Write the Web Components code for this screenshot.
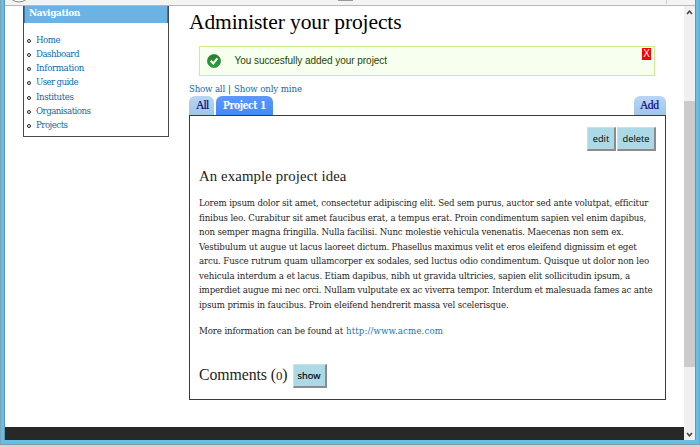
<!DOCTYPE html>
<html lang="en"><head><meta charset="utf-8"><title>Administer your projects</title>
<style>
html,body{margin:0;width:700px;height:447px;overflow:hidden;background:#fff}
body{font-family:"DejaVu Serif Condensed","DejaVu Serif",serif;font-stretch:condensed;color:#262626;font-size:9.6px}
</style></head><body>
<app-window></app-window>
<script>
const define=(name,html,ready)=>customElements.define(name,class extends HTMLElement{
  connectedCallback(){
    if(this.shadowRoot)return;
    const t=document.createElement('template');t.innerHTML=html;
    this.attachShadow({mode:'open'}).append(t.content.cloneNode(true));
    if(ready)ready(this);
  }
});

/* A single line whose tracking is adjusted to the width in its "w" attribute. */
define('text-line',`<style>
:host{display:block;white-space:nowrap;line-height:inherit}
span{display:inline-block;white-space:nowrap}
</style><span><slot></slot></span>`,el=>{
  const s=el.shadowRoot.querySelector('span');
  const w=+el.getAttribute('w');
  if(w){const n=el.textContent.length;s.style.letterSpacing=((w-s.getBoundingClientRect().width)/n)+'px'}
});

define('nav-box',`<style>
:host{display:block;box-sizing:border-box;width:146px;height:131px;border:1px solid #4a4a4a;border-top:0}
header{height:17px;background:#6bb2e5;color:#fff;font-weight:bold;font-size:10px;line-height:14px;padding-left:5px;box-sizing:border-box;box-shadow:inset 1px 0 #3878aa,inset -1px 0 #3878aa}
ul{list-style:none;margin:0;padding:10px 0 0 3px}
li{display:flex;align-items:center;gap:5px;height:14.15px;line-height:14px;color:#0d6cb0}
li::before{content:"";box-sizing:border-box;width:4px;height:4px;border:1.2px solid #222;border-radius:50%;margin-top:2px}
</style><header><text-line w="51">Navigation</text-line></header>
<ul><li><text-line w="24">Home</text-line></li><li><text-line w="43">Dashboard</text-line></li><li><text-line w="48">Information</text-line></li><li><text-line w="42">User guide</text-line></li><li><text-line w="37.5">Institutes</text-line></li><li><text-line w="54.5">Organisations</text-line></li><li><text-line w="31.5">Projects</text-line></li></ul>`);

define('success-message',`<style>
:host{display:flex;box-sizing:border-box;width:456px;height:30px;border:1px solid #c9ed91;background:#f7ffee;color:#234600;font:10px/28px "Liberation Sans",sans-serif;padding:0 3px 0 7px;align-items:center}
svg{width:14px;height:14px;margin-right:13.5px;flex:none}
i{font-style:normal;margin-left:auto;align-self:flex-start;margin-top:1px;width:9px;height:12px;background:#f00;color:#fff;font-size:10px;line-height:12px;text-align:center}
</style><svg viewBox="0 0 14 14"><defs><linearGradient id="g" x2="0" y2="1"><stop stop-color="#267c2b"/><stop offset="1" stop-color="#29a637"/></linearGradient></defs><circle cx="7" cy="7" r="6.6" fill="url(#g)" stroke="#43834a" stroke-width=".7"/><path d="M3.6 6.7L6.3 9.5L10.4 4.3" fill="none" stroke="#fff" stroke-width="2.1"/></svg><text-line w="152.5">You succesfully added your project</text-line><i>X</i>`);

define('tab-item',`<style>
:host{display:block;box-sizing:border-box;height:19px;border-radius:6px 6px 0 0;background:linear-gradient(#b9d5f4,#a0c6e6);color:#00008b;font:11.5px/18px "Liberation Serif",serif;padding-left:7px;-webkit-text-stroke:.2px}
:host([active]){background:linear-gradient(#5b98ff,#4489fb);color:#fff;font:bold 10.2px/18px "DejaVu Serif Condensed","DejaVu Serif",serif;font-stretch:condensed;-webkit-text-stroke:0}
:host([add]){margin-left:auto;padding-left:6px}
.digit{font-size:.85em}
</style><slot></slot>`);

define('push-button',`<style>
:host{display:block;box-sizing:border-box;height:24px;background:#add8e6;border:1px solid #c8e2eb;border-right:2px solid #8b8b8b;border-bottom:2px solid #8b8b8b;color:#000;font:9.3px/21px "Open Sans",sans-serif;text-align:center}
</style><slot></slot>`);

define('project-panel',`<style>
:host{display:block;box-sizing:border-box;width:477px;height:285px;border:1px solid #3c3c3c;padding:11px 9px 0 9px}
.actions{display:flex;justify-content:flex-end;gap:1px}
h2{font:14.8px/20px "Liberation Serif",serif;color:#222;margin:15px 0 0}
.body{margin-top:10px;line-height:14.5px}
.body text-line{height:14.5px}
.more{display:flex;gap:3px;line-height:14px;margin-top:12px}
.more .link{color:#0d76bd}
.comments{display:flex;align-items:center;margin-top:26px}
.comments h2{margin:0 5px 0 0;height:22px;font-size:15.8px}
.digit{font-size:.82em}
</style>
<div class="actions"><push-button style="width:29px">edit</push-button><push-button style="width:39px">delete</push-button></div>
<h2><text-line w="147.5">An example project idea</text-line></h2>
<div class="body">
<text-line w="449">Lorem ipsum dolor sit amet, consectetur adipiscing elit. Sed sem purus, auctor sed ante volutpat, efficitur</text-line>
<text-line w="447">finibus leo. Curabitur sit amet faucibus erat, a tempus erat. Proin condimentum sapien vel enim dapibus,</text-line>
<text-line w="424.5">non semper magna fringilla. Nulla facilisi. Nunc molestie vehicula venenatis. Maecenas non sem ex.</text-line>
<text-line w="437.5">Vestibulum ut augue ut lacus laoreet dictum. Phasellus maximus velit et eros eleifend dignissim et eget</text-line>
<text-line w="450">arcu. Fusce rutrum quam ullamcorper ex sodales, sed luctus odio condimentum. Quisque ut dolor non leo</text-line>
<text-line w="431">vehicula interdum a et lacus. Etiam dapibus, nibh ut gravida ultricies, sapien elit sollicitudin ipsum, a</text-line>
<text-line w="453.5">imperdiet augue mi nec orci. Nullam vulputate ex ac viverra tempor. Interdum et malesuada fames ac ante</text-line>
<text-line w="309.5">ipsum primis in faucibus. Proin eleifend hendrerit massa vel scelerisque.</text-line>
</div>
<div class="more"><text-line w="144">More information can be found at</text-line><text-line class="link" w="97">http://www.acme.com</text-line></div>
<div class="comments"><h2><text-line w="88.5">Comments (<span class="digit">0</span>)</text-line></h2><push-button style="width:34px;-webkit-text-stroke:.2px">show</push-button></div>`);

define('project-page',`<style>
:host{display:flex;flex:1;box-sizing:border-box;padding-left:18px;gap:20px}
h1{font:21.5px/24px "Liberation Serif",serif;color:#000;margin:4px 0 0}
main{width:477px}
success-message{margin:12px 0 0 10px}
.links{display:flex;gap:3px;height:14px;line-height:14px;margin-top:6px;color:#0d6cb0}
.links b{font-weight:normal;color:#333}
.tabs{display:flex;gap:2px}
</style><nav-box></nav-box><main><h1><text-line w="212.5">Administer your projects</text-line></h1><success-message></success-message>
<div class="links"><text-line w="36">Show all</text-line><b>|</b><text-line w="68">Show only mine</text-line></div>
<div class="tabs"><tab-item style="width:25px"><text-line w="12.5">All</text-line></tab-item><tab-item active style="width:57px"><text-line w="43">Project 1</text-line></tab-item><tab-item add style="width:32px"><text-line w="18.5">Add</text-line></tab-item></div>
<project-panel></project-panel></main>`);

define('scroll-bar',`<style>
:host{display:flex;flex-direction:column;justify-content:space-between;align-items:center;width:11px;background:linear-gradient(#f0f0f0 95px,#cbcbcb 95px 361px,#f0f0f0 361px)}
svg{width:7px;height:5px;margin:4px 0 3px;fill:none;stroke:#444;stroke-width:1.6}
</style><svg viewBox="0 0 7 5"><path d="M1 4L3.5 1.3L6 4"/></svg><svg viewBox="0 0 7 5"><path d="M1 1L3.5 3.7L6 1"/></svg>`);

define('app-window',`<style>
:host{display:flex;flex-direction:column;height:447px;background:#d7d5d2}
.frame{box-sizing:border-box;height:445px;background:#68bde2;border-left:1px solid #78a5bb;border-right:1px solid #78a5bb;border-bottom:1px solid #8299a3;padding:0 3px 4px 3px;display:flex;flex-direction:column}
.inner{border-left:1px solid #579ab9;border-right:1px solid #579ab9;display:flex;flex-direction:column;height:440px;background:#fff}
.bar{box-sizing:border-box;height:6px;background:#f3f3f3;border-bottom:1px solid #b9b9b9;flex:none;display:flex;align-items:flex-start;overflow:hidden}
.bar svg{width:16px;height:3px;margin-left:6px}
.bar i{width:15px;height:1px;background:#999;margin-left:311px}
.bar u{width:1px;height:4px;background:#ccc;margin-left:313px}
.view{display:flex;flex:1;min-height:0}
.page{display:flex;flex-direction:column;flex:1}
footer{height:13px;background:#282828;flex:none}
project-page{min-height:0}
</style><div class="frame"><div class="inner"><div class="bar"><svg viewBox="0 0 16 3"><path d="M0-1Q8 5 16-1" fill="#fff" stroke="#888"/></svg><i></i><u></u></div>
<div class="view"><div class="page"><project-page></project-page><footer></footer></div><scroll-bar></scroll-bar></div></div></div>`);
</script></body></html>
